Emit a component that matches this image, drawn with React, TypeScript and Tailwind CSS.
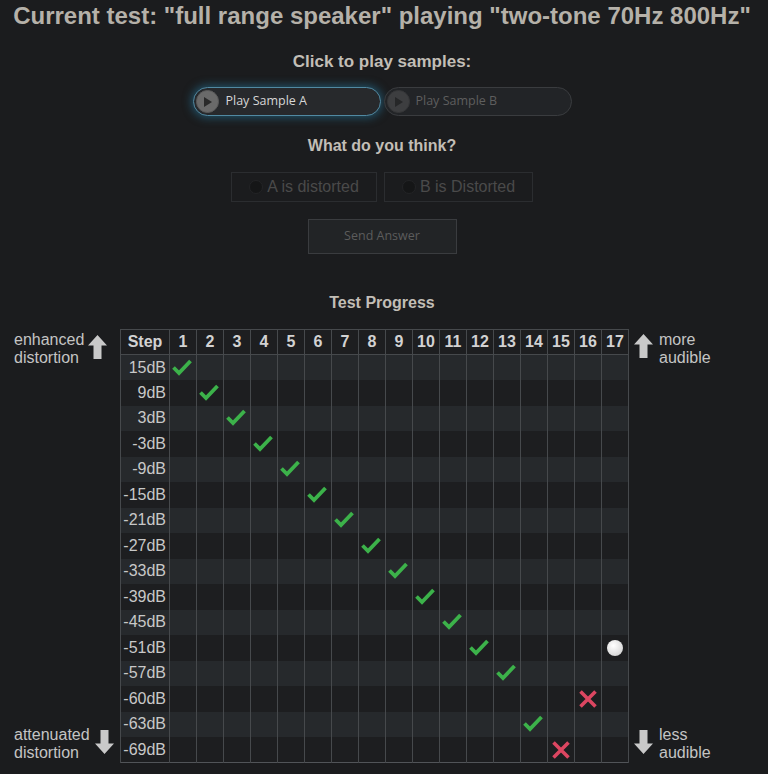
import React from "react";

const rows = ["15dB","9dB","3dB","-3dB","-9dB","-15dB","-21dB","-27dB","-33dB","-39dB","-45dB","-51dB","-57dB","-60dB","-63dB","-69dB"];
type Mark = "check" | "x" | "dot";
const marks: Record<string, Mark> = {};
for (let i = 0; i <= 10; i++) marks[`${i}-${i + 1}`] = "check";
marks["11-12"] = "check";
marks["11-17"] = "dot";
marks["12-13"] = "check";
marks["13-16"] = "x";
marks["14-14"] = "check";
marks["15-15"] = "x";

const cols = Array.from({ length: 17 }, (_, i) => i + 1);

function Check() {
  return (
    <svg width="22" height="18" viewBox="0 0 22 18" className="block mx-auto -translate-x-[1px] -translate-y-[1px]">
      <path d="M2.5 9.5 L8 15 L19.5 3" fill="none" stroke="#3cb24a" strokeWidth="3.8" strokeLinejoin="miter" />
    </svg>
  );
}
function Cross() {
  return (
    <svg width="20" height="18" viewBox="0 0 20 18" className="block mx-auto">
      <path d="M2.5 1.5 L17.5 16.5 M17.5 1.5 L2.5 16.5" fill="none" stroke="#dc4661" strokeWidth="3.6" />
    </svg>
  );
}
function Dot() {
  return <div className="mx-auto w-[16px] h-[16px] rounded-full bg-[radial-gradient(circle_at_40%_35%,#ffffff,#e2e2e2_55%,#c8c8c8)]" />;
}

function ArrowUp() {
  return (
    <svg width="19" height="24" viewBox="0 0 19 24" className="block shrink-0">
      <polygon points="9.5,0 19,10.5 13.5,10.5 13.5,24 5.5,24 5.5,10.5 0,10.5" fill="#c9c9c9" />
    </svg>
  );
}
function ArrowDown() {
  return (
    <svg width="19" height="24" viewBox="0 0 19 24" className="block shrink-0">
      <polygon points="9.5,24 19,13.5 13.5,13.5 13.5,0 5.5,0 5.5,13.5 0,13.5" fill="#c9c9c9" />
    </svg>
  );
}

function PlayCircle({ active }: { active: boolean }) {
  return (
    <div
      className={
        active
          ? "w-[23px] h-[23px] rounded-full bg-[#6a6a6a] border border-[#5a5a5a] flex items-center justify-center shrink-0"
          : "w-[23px] h-[23px] rounded-full bg-[#3d3e40] border border-[#353638] flex items-center justify-center shrink-0"
      }
    >
      <svg width="8" height="10" viewBox="0 0 8 10" className="ml-[2px]">
        <polygon points="0,0 8,5 0,10" fill={active ? "#2a2a2a" : "#262728"} />
      </svg>
    </div>
  );
}

export default function App() {
  const arial = "font-['Liberation_Sans',Arial,sans-serif]";
  const sans = "font-['Open_Sans','Noto_Sans',sans-serif]";
  return (
    <div className={`w-[768px] h-[774px] bg-[#1b1c1e] overflow-hidden ${arial}`}>
      <div className="pr-[4px] flex flex-col items-center">
        <h1 className="h-[32px] leading-[32px] text-[24px] font-bold text-[#b5b1a9] whitespace-nowrap">
          Current test: "full range speaker" playing "two-tone 70Hz 800Hz"
        </h1>
        <h3 className="mt-[20px] h-[20px] leading-[20px] text-[17px] font-bold text-[#c2beb6]">Click to play samples:</h3>
        <div className="mt-[15px] flex gap-[3px]">
          <div className="w-[188px] h-[29px] rounded-full border border-[#5189a2] bg-[#27292c] shadow-[0_0_8px_2px_rgba(40,130,170,0.5)] flex items-center pl-[2px]">
            <PlayCircle active />
            <span className={`ml-[7px] text-[12.5px] text-[#d6d6d6] ${sans}`}>Play Sample A</span>
          </div>
          <div className="w-[188px] h-[29px] rounded-full border border-[#3a3c3f] bg-[#222427] flex items-center pl-[2px]">
            <PlayCircle active={false} />
            <span className={`ml-[6px] text-[12.5px] text-[#5e5e5e] ${sans}`}>Play Sample B</span>
          </div>
        </div>
        <h3 className="mt-[20px] h-[20px] leading-[20px] text-[16px] font-bold text-[#c2beb6]">What do you think?</h3>
        <div className="mt-[16px] flex gap-[7px]">
          <div className="w-[146px] h-[30px] border border-[#2b2d30] flex items-center justify-center gap-[4px]">
            <div className="w-[14px] h-[14px] rounded-full bg-[#151617] border border-[#232426]" />
            <span className="text-[16px] text-[#4a4a4a]">A is distorted</span>
          </div>
          <div className="w-[149px] h-[30px] border border-[#2b2d30] flex items-center justify-center gap-[4px]">
            <div className="w-[14px] h-[14px] rounded-full bg-[#151617] border border-[#232426]" />
            <span className="text-[16px] text-[#4a4a4a]">B is Distorted</span>
          </div>
        </div>
        <div className={`mt-[17px] w-[149px] h-[35px] bg-[#222426] border border-[#3a3c3f] flex items-center justify-center text-[12.5px] text-[#5c5c5c] ${sans}`}>
          Send Answer
        </div>
        <h3 className="mt-[39px] h-[20px] leading-[20px] text-[16px] font-bold text-[#c2beb6]">Test Progress</h3>
      </div>

      <div className="mt-[16px] flex">
        <div className="w-[120px] pl-[14px] flex flex-col justify-between pt-[2px] pb-[1px] text-[16px] leading-[18px] text-[#c4c4c4]">
          <div className="flex items-start gap-[4px]">
            <div>enhanced<br />distortion</div>
            <div className="mt-[4px]"><ArrowUp /></div>
          </div>
          <div className="flex items-start gap-[5px]">
            <div>attenuated<br />distortion</div>
            <div className="mt-[4px]"><ArrowDown /></div>
          </div>
        </div>

        <table className="border-collapse table-fixed w-[508px] border border-[#515458]">
          <colgroup>
            <col className="w-[49px]" />
            {cols.map((c) => (
              <col key={c} className="w-[27px]" />
            ))}
          </colgroup>
          <thead>
            <tr className="h-[25px] bg-[#1d1e20]">
              <th className="border border-[#46494c] text-[16px] font-bold text-[#d2d2d2] text-center p-0">Step</th>
              {cols.map((c) => (
                <th key={c} className="border border-[#46494c] text-[16px] font-bold text-[#d2d2d2] text-center p-0">
                  {c}
                </th>
              ))}
            </tr>
          </thead>
          <tbody>
            {rows.map((r, i) => (
              <tr key={r} className={i % 2 === 0 ? "h-[25.5px] bg-[#26292c]" : "h-[25.5px] bg-[#1d1e20]"}>
                <td className="border-x border-[#46494c] text-right pr-[3px] text-[16px] text-[#c8c8c8] p-0">{r}</td>
                {cols.map((c) => {
                  const m = marks[`${i}-${c}`];
                  return (
                    <td key={c} className="border-x border-[#46494c] p-0 align-middle">
                      {m === "check" ? <Check /> : m === "x" ? <Cross /> : m === "dot" ? <Dot /> : null}
                    </td>
                  );
                })}
              </tr>
            ))}
          </tbody>
        </table>

        <div className="pl-[5px] flex flex-col justify-between pt-[2px] pb-[1px] text-[16px] leading-[18px] text-[#c4c4c4]">
          <div className="flex items-start gap-[6px]">
            <div className="mt-[3px]"><ArrowUp /></div>
            <div>more<br />audible</div>
          </div>
          <div className="flex items-start gap-[6px]">
            <div className="mt-[4px]"><ArrowDown /></div>
            <div>less<br />audible</div>
          </div>
        </div>
      </div>
    </div>
  );
}
